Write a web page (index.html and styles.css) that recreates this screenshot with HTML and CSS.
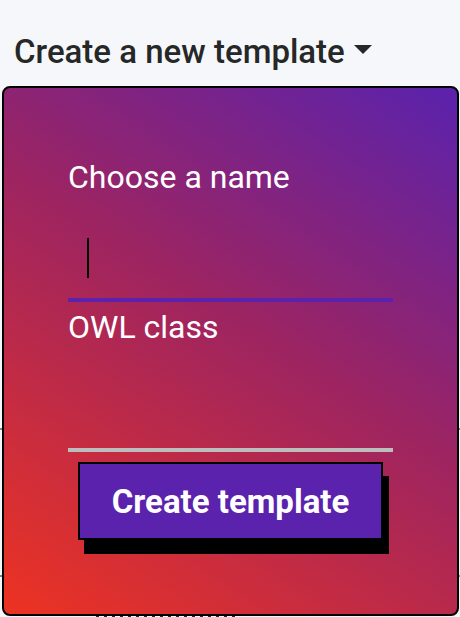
FILE: index.html
```html
<!DOCTYPE html>
<html lang="en">
<head>
<meta charset="utf-8">
<meta name="viewport" content="width=device-width, initial-scale=1">
<title>Create a new template</title>
<link rel="stylesheet" href="styles.css">
</head>
<body>
<main class="page">
  <button class="toggle" type="button" aria-expanded="true" aria-controls="panel">
    <span>Create a new template</span>
    <svg class="caret" viewBox="0 0 18 9" aria-hidden="true"><path d="M0 0H18L9 9Z"/></svg>
  </button>
  <form class="panel" id="panel">
    <label class="label" for="name">Choose a name</label>
    <input class="input input-active" id="name" type="text">
    <label class="label" for="owl">OWL class</label>
    <input class="input" id="owl" type="text">
    <button class="submit" type="button">Create template</button>
  </form>
</main>
</body>
</html>
```

FILE: styles.css
```css
* {
  box-sizing: border-box;
}

body {
  margin: 0;
  background: #f5f7fb;
  color: #252827;
  font-family: Roboto, "Liberation Sans", sans-serif;
  font-size: 33px;
}

.page {
  background: linear-gradient(#858585, #858585) 0 428px / 100% 2px no-repeat,
    linear-gradient(#858585, #858585) 0 575px / 100% 2px no-repeat,
    repeating-linear-gradient(to right, #252827 0 3px, transparent 3px 8px) 96px 100% / 142px 1px no-repeat;
  padding: 16px 1px 1px 2px;
}

.toggle {
  display: flex;
  align-items: center;
  gap: 9px;
  height: 70px;
  padding: 0 12px;
  border: 0;
  background: none;
  color: inherit;
  font: inherit;
  font-weight: 500;
}

.caret {
  width: 18px;
  height: 9px;
  margin-bottom: 4px;
  fill: currentColor;
}

.panel {
  display: flex;
  flex-direction: column;
  padding: 64px;
  border: 2px solid #000;
  border-radius: 8px;
  background: linear-gradient(33deg, #ed3322, #9c2462 55%, #5a22ad);
}

.label {
  color: #fff;
  font-size: 32px;
  line-height: 50px;
}

.input {
  width: 100%;
  height: 84px;
  margin-top: 16px;
  padding: 20px;
  border: 0;
  border-bottom: 4px solid #bdbdbd;
  border-radius: 0;
  outline: 0;
  background: none;
  color: #000;
  font: inherit;
}

.input-active {
  border-bottom-color: #5a22ad;
  background: linear-gradient(#000, #000) 19px 20px / 2px 40px no-repeat;
}

.submit {
  height: 78px;
  margin: 10px;
  border: 2px solid #000;
  border-radius: 0;
  background: #5a22ad;
  box-shadow: 6px 14px 0 #000;
  color: #fff;
  font: inherit;
  font-weight: 700;
}
```
